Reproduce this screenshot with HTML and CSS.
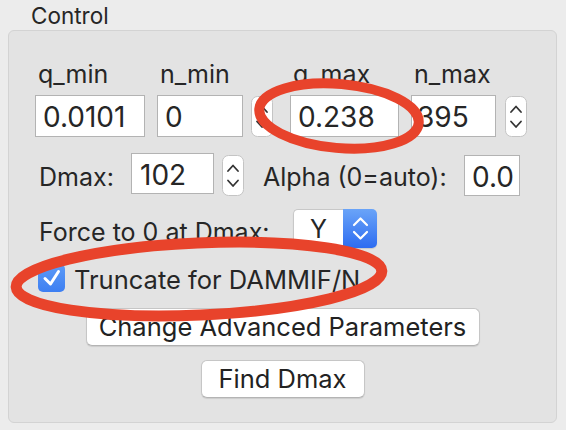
FILE: index.html
```html
<!DOCTYPE html>
<html>
<head>
<meta charset="utf-8">
<link rel="stylesheet" href="styles.css">
</head>
<body>
<div class="window">
  <div class="title">Control</div>
  <div class="group">
    <div class="row-q">
      <div class="field f-qmin"><div class="label">q_min</div><div class="input">0.0101</div></div>
      <div class="field f-nmin"><div class="label">n_min</div><div class="input">0</div></div>
      <div class="stepper s-q1"><svg width="22" height="41" viewBox="0 0 22 41"><rect x="0.5" y="0.5" width="21" height="40" rx="6" fill="#fff" stroke="#c4c4c4"/><path d="M6 16 L11 10.5 L16 16 M6 25.5 L11 31 L16 25.5" fill="none" stroke="#333" stroke-width="1.8" stroke-linecap="round" stroke-linejoin="round"/></svg></div>
      <div class="field f-qmax"><div class="label">q_max</div><div class="input">0.238</div></div>
      <div class="field f-nmax"><div class="label">n_max</div><div class="input in-nmax">395</div></div>
      <div class="stepper s-q2"><svg width="22" height="41" viewBox="0 0 22 41"><rect x="0.5" y="0.5" width="21" height="40" rx="6" fill="#fff" stroke="#c4c4c4"/><path d="M6 16 L11 10.5 L16 16 M6 25.5 L11 31 L16 25.5" fill="none" stroke="#333" stroke-width="1.8" stroke-linecap="round" stroke-linejoin="round"/></svg></div>
    </div>
    <div class="row-d">
      <div class="rlabel l-dmax">Dmax:</div>
      <div class="input in-dmax">102</div>
      <div class="stepper s-dmax"><svg width="22" height="41" viewBox="0 0 22 41"><rect x="0.5" y="0.5" width="21" height="40" rx="6" fill="#fff" stroke="#c4c4c4"/><path d="M6 16 L11 10.5 L16 16 M6 25.5 L11 31 L16 25.5" fill="none" stroke="#333" stroke-width="1.8" stroke-linecap="round" stroke-linejoin="round"/></svg></div>
      <div class="rlabel l-alpha">Alpha (0=auto):</div>
      <div class="input in-alpha">0.0</div>
    </div>
    <div class="row-f">
      <div class="rlabel l-force">Force to 0 at Dmax:</div>
      <div class="select">
        <span class="sel-val">Y</span>
        <span class="sel-arrow"><svg width="34" height="39" viewBox="0 0 34 39"><path d="M11 16 L17.5 9.5 L24 16 M11 23 L17.5 29.5 L24 23" fill="none" stroke="#fff" stroke-width="2.2" stroke-linecap="round" stroke-linejoin="round"/></svg></span>
      </div>
    </div>
    <div class="row-c">
      <span class="check"><svg width="27" height="28" viewBox="0 0 27 28"><defs><linearGradient id="cb" x1="0" y1="0" x2="0" y2="1"><stop offset="0" stop-color="#5d9bf7"/><stop offset="1" stop-color="#3d7ff2"/></linearGradient></defs><rect x="0" y="0" width="27" height="28" rx="5" fill="url(#cb)"/><path d="M7 14.5 L12.5 20 L20.5 7.5" fill="none" stroke="#fff" stroke-width="3" stroke-linecap="round" stroke-linejoin="round"/></svg></span>
      <span class="check-label">Truncate for DAMMIF/N</span>
    </div>
    <div class="btn-row"><div class="button b-adv">Change Advanced Parameters</div></div>
    <div class="btn-row"><div class="button b-find">Find Dmax</div></div>
  </div>
  <svg class="annot" width="566" height="430" viewBox="0 0 566 430">
    <ellipse cx="339" cy="116" rx="80" ry="32" transform="rotate(5 339 116)" fill="none" stroke="#e8432b" stroke-width="10"/>
    <ellipse cx="199" cy="279" rx="183" ry="36" transform="rotate(-2.5 199 279)" fill="none" stroke="#e8432b" stroke-width="11"/>
  </svg>
</div>
</body>
</html>
```
FILE: styles.css
```css
* { box-sizing: border-box; }
body { margin: 0; background: #ececec; }
.window {
  position: relative;
  width: 566px;
  height: 430px;
  overflow: hidden;
  font-family: Inter, "Noto Sans", sans-serif;
  color: #262626;
}
.title {
  height: 30px;
  padding: 2px 0 0 31px;
  font-size: 22.5px;
  line-height: 28px;
}
.group {
  margin-left: 8px;
  width: 549px;
  height: 393px;
  border: 1px solid #d3d3d3;
  border-radius: 6px;
  background: #e3e3e3;
  padding: 28px 26px 0 26px;
}
.row-q {
  display: flex;
  align-items: flex-end;
  height: 78px;
}
.field { display: flex; flex-direction: column; }
.label {
  font-size: 25px;
  line-height: 30px;
  height: 36px;
  padding-left: 3px;
}
.input {
  height: 42px;
  background: #fff;
  border: 1px solid #b3b3b3;
  font-size: 28px;
  line-height: 37px;
  padding: 3px 0 0 7px;
  white-space: nowrap;
  overflow: hidden;
}
.in-nmax { padding-left: 5px; }
.f-qmin { width: 110px; }
.f-nmin { width: 86px; margin-left: 12px; }
.f-qmax { width: 109px; margin-left: 17px; }
.f-nmax { width: 85px; margin-left: 12px; }
.stepper { width: 22px; height: 41px; }
.stepper svg { display: block; }
.s-q1 { margin-left: 8px; }
.s-q2 { margin-left: 9px; }
.row-d {
  display: flex;
  align-items: center;
  height: 43px;
  margin-top: 16px;
}
.rlabel {
  font-size: 25px;
  line-height: 30px;
  padding-left: 4px;
  white-space: nowrap;
}
.l-dmax { width: 96px; padding-top: 5px; }
.in-dmax { width: 83px; height: 41px; align-self: flex-start; padding-left: 8px; }
.s-dmax { margin-left: 8px; align-self: flex-end; }
.l-alpha { width: 201px; margin-left: 19px; padding-left: 0; padding-top: 5px; }
.in-alpha { width: 56px; height: 41px; align-self: flex-end; }
.row-f {
  display: flex;
  align-items: center;
  height: 39px;
  margin-top: 13px;
}
.l-force { width: 258px; padding-top: 6px; }
.select {
  display: flex;
  width: 84px;
  height: 39px;
  border-radius: 5px;
  box-shadow: 0 1px 1px rgba(0, 0, 0, 0.12);
}
.sel-val {
  width: 50px;
  background: #fff;
  border: 1px solid #c8c8c8;
  border-right: none;
  border-radius: 5px 0 0 5px;
  text-align: center;
  font-size: 25px;
  line-height: 35px;
  padding-top: 2px;
}
.sel-arrow {
  width: 34px;
  background: linear-gradient(#6aa4f8, #2d6cf1);
  border-radius: 0 5px 5px 0;
}
.sel-arrow svg { display: block; }
.row-c {
  display: flex;
  align-items: center;
  height: 28px;
  margin-top: 16px;
}
.check { width: 27px; height: 28px; margin-left: 3px; }
.check svg { display: block; }
.check-label {
  font-size: 25.5px;
  line-height: 28px;
  padding-top: 4px;
  margin-left: 9px;
  white-space: nowrap;
}
.btn-row { display: flex; justify-content: center; }
.button {
  height: 38px;
  background: #fff;
  border: 1px solid #c6c6c6;
  border-bottom-color: #b4b4b4;
  border-radius: 6px;
  box-shadow: 0 1px 1px rgba(0, 0, 0, 0.1);
  font-size: 25.5px;
  line-height: 36px;
  text-align: center;
  white-space: nowrap;
  color: #222;
}
.b-adv { width: 394px; margin-top: 16px; }
.b-find { width: 164px; margin-top: 14px; }
.annot { position: absolute; left: 0; top: 0; }
```
